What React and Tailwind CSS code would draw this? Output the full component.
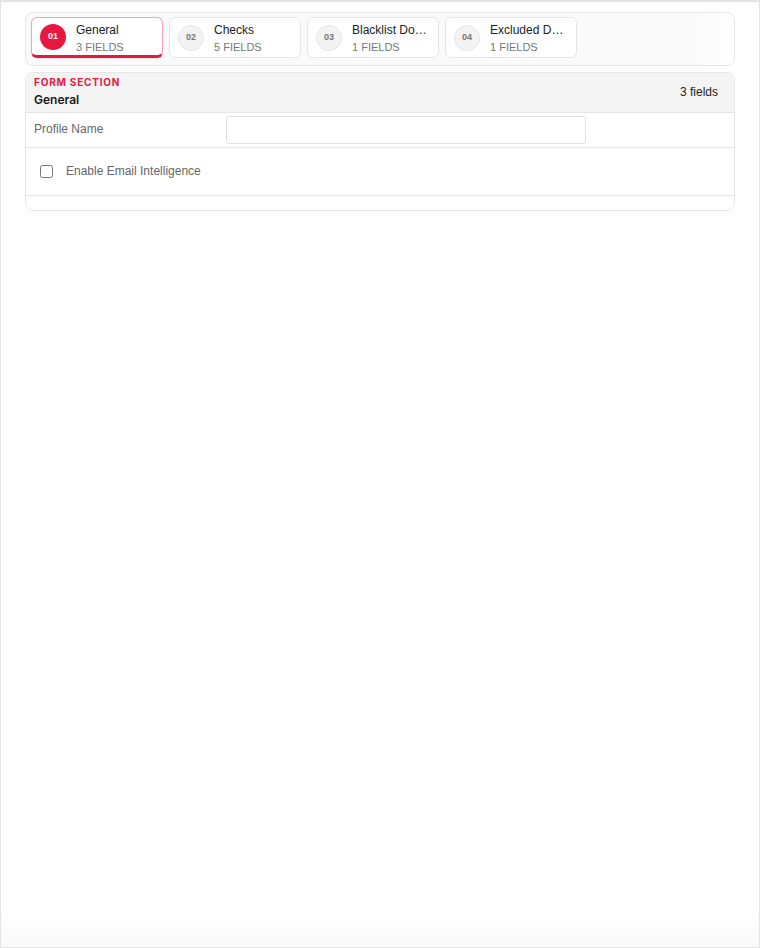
import { useState } from "react";

const tabs = [
  { num: "01", title: "General", fields: 3 },
  { num: "02", title: "Checks", fields: 5 },
  { num: "03", title: "Blacklist Domains", fields: 1 },
  { num: "04", title: "Excluded Domains", fields: 1 },
];

function Tab({ tab, active, onClick }) {
  return (
    <button
      type="button"
      onClick={onClick}
      className={
        active
          ? "flex h-[41px] w-[132px] shrink-0 items-center gap-[10px] rounded-md border border-[#f3a3b3] border-b-[3px] border-b-[#e8173f] bg-white px-2 text-left shadow-[0_1px_2px_rgba(0,0,0,0.08)]"
          : "flex h-[41px] w-[132px] shrink-0 items-center gap-[10px] rounded-md border border-[#e6e6e6] bg-white px-2 text-left"
      }
    >
      <span
        className={
          active
            ? "flex h-[26px] w-[26px] shrink-0 items-center justify-center rounded-full bg-[#e8173f] text-[9px] font-bold text-white"
            : "flex h-[26px] w-[26px] shrink-0 items-center justify-center rounded-full border border-[#e6e6e6] bg-[#f3f3f3] text-[9px] font-bold text-[#777]"
        }
      >
        {tab.num}
      </span>
      <span className={active ? "flex min-w-0 flex-col pt-[3px] leading-none" : "flex min-w-0 flex-col pt-[2px] leading-none"}>
        <span className="truncate text-[12px] text-[#222]">{tab.title}</span>
        <span className="mt-[6px] text-[11px] text-[#777]">{tab.fields} FIELDS</span>
      </span>
    </button>
  );
}

export default function App() {
  const [active, setActive] = useState(0);
  const [name, setName] = useState("");
  const [enabled, setEnabled] = useState(false);

  return (
    <div
      className="h-[948px] w-full border-x border-b border-t-2 border-[#e4e4e4] bg-white shadow-[inset_0_-30px_30px_-20px_rgba(0,0,0,0.035)]"
      style={{ fontFamily: '"Liberation Sans", Arial, sans-serif' }}
    >
      <div className="px-6 pt-[10px]">
        <div className="relative h-[54px] overflow-hidden rounded-lg border border-[#e6e6e6] bg-[#fafafa]">
          <div className="flex gap-[6px] px-[5px] pt-1">
            {tabs.map((t, i) => (
              <Tab key={t.num} tab={t} active={i === active} onClick={() => setActive(i)} />
            ))}
          </div>
          <div className="pointer-events-none absolute inset-y-0 right-0 w-10 bg-gradient-to-l from-white to-transparent" />
        </div>

        <div className="mt-[6px] overflow-hidden rounded-lg border border-[#e6e6e6] bg-white">
          <div className="flex h-[40px] items-center justify-between border-b border-[#e6e6e6] bg-[#f4f4f4] pl-2 pr-4">
            <div className="flex flex-col pb-[3px] leading-none" style={{ fontFamily: "Inter, Arial, sans-serif" }}>
              <span className="text-[10px] font-bold tracking-[0.08em] text-[#e8173f]">FORM SECTION</span>
              <span className="mt-[7px] text-[12px] font-semibold text-[#1a1a1a]">General</span>
            </div>
            <span className="pb-[2px] text-[12px] text-[#222]">3 fields</span>
          </div>

          <div className="flex h-[35px] items-center border-b border-[#e6e6e6] pb-[1px] pl-2">
            <label className="w-[192px] pb-[1px] text-[12px] text-[#666]">Profile Name</label>
            <input
              value={name}
              onChange={(e) => setName(e.target.value)}
              className="h-[28px] w-[360px] rounded-[3px] border border-[#e2e2e2] bg-white px-2 text-[12px] outline-none"
            />
          </div>

          <div className="flex h-[48px] items-center border-b border-[#e6e6e6] pl-[14px]">
            <input
              type="checkbox"
              checked={enabled}
              onChange={(e) => setEnabled(e.target.checked)}
              className="h-[13px] w-[13px]"
            />
            <span className="ml-[13px] pb-[2px] text-[12px] text-[#666]">Enable Email Intelligence</span>
          </div>

          <div className="h-[14px]" />
        </div>
      </div>
    </div>
  );
}
